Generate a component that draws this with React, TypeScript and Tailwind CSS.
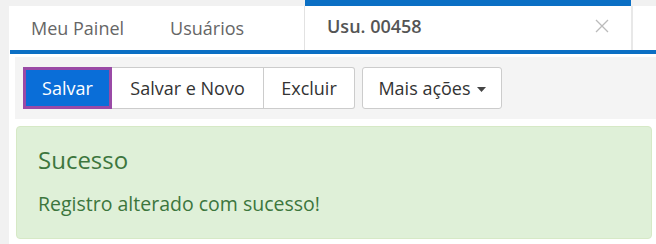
import React from "react";

const Caret = () => (
  <svg width="9" height="5" viewBox="0 0 9 5" className="ml-[6px] mt-[2px]">
    <path d="M0 0 L9 0 L4.5 5 Z" fill="#444" />
  </svg>
);

export default function App() {
  return (
    <div className="flex h-[244px] w-[656px] bg-[#f1f1f1] pl-[9px] font-['Open_Sans',sans-serif] overflow-hidden">
      <div className="flex flex-1 flex-col bg-white">
        {/* tab bar */}
        <div className="flex h-[50px] items-end bg-[#f1f1f1]">
          <div className="flex h-[44px] w-[296px] items-center border-r border-[#e2e2e2] bg-white text-[18px] text-[#666]">
            <span className="pl-[22px]">Meu Painel</span>
            <span className="pl-[46px]">Usuários</span>
          </div>
          <div className="flex h-[50px] w-[326px] items-center justify-between border-t-[6px] border-[#0b6fc4] bg-white pl-[22px] pr-[22px] text-[18px] font-semibold text-[#555]">
            <span className="-mt-[4px]">Usu. 00458</span>
            <svg width="14" height="14" viewBox="0 0 14 14" className="-mt-[4px]">
              <path d="M1 1 L13 13 M13 1 L1 13" stroke="#bbb" strokeWidth="1.3" />
            </svg>
          </div>
          <div className="h-[44px] flex-1 border-l-2 border-[#e8e8e8] bg-white" />
        </div>
        <div className="ml-px h-[4px] bg-[#0b6fc4]" />

        {/* toolbar */}
        <div className="ml-[6px] mt-[3px] flex h-[62px] items-center bg-[#f4f4f4] pl-[8px]">
          <div className="flex h-[42px] text-[18px] text-[#333]">
            <button className="flex w-[89px] items-center justify-center border-[3px] border-[#9a4aa6] bg-[#0a6ed8] text-white">
              Salvar
            </button>
            <button className="flex w-[152px] items-center justify-center border-y border-r border-[#ccc] bg-white">
              Salvar e Novo
            </button>
            <button className="flex w-[91px] items-center justify-center rounded-r-[3px] border-y border-r border-[#ccc] bg-white">
              Excluir
            </button>
          </div>
          <button className="ml-[7px] flex h-[42px] w-[140px] items-center justify-center rounded-[3px] border border-[#ccc] bg-white text-[18px] text-[#333]">
            Mais ações
            <Caret />
          </button>
        </div>

        {/* alert */}
        <div className="ml-[7px] mr-[4px] mt-[7px] h-[113px] rounded-[4px] border border-[#d6e9c6] bg-[#dff0d8] px-[21px] pt-[18px] text-[#3c763d]">
          <div className="text-[24px] leading-[30px]">Sucesso</div>
          <div className="mt-[16px] text-[19.5px] leading-[26px]">Registro alterado com sucesso!</div>
        </div>
      </div>
    </div>
  );
}
